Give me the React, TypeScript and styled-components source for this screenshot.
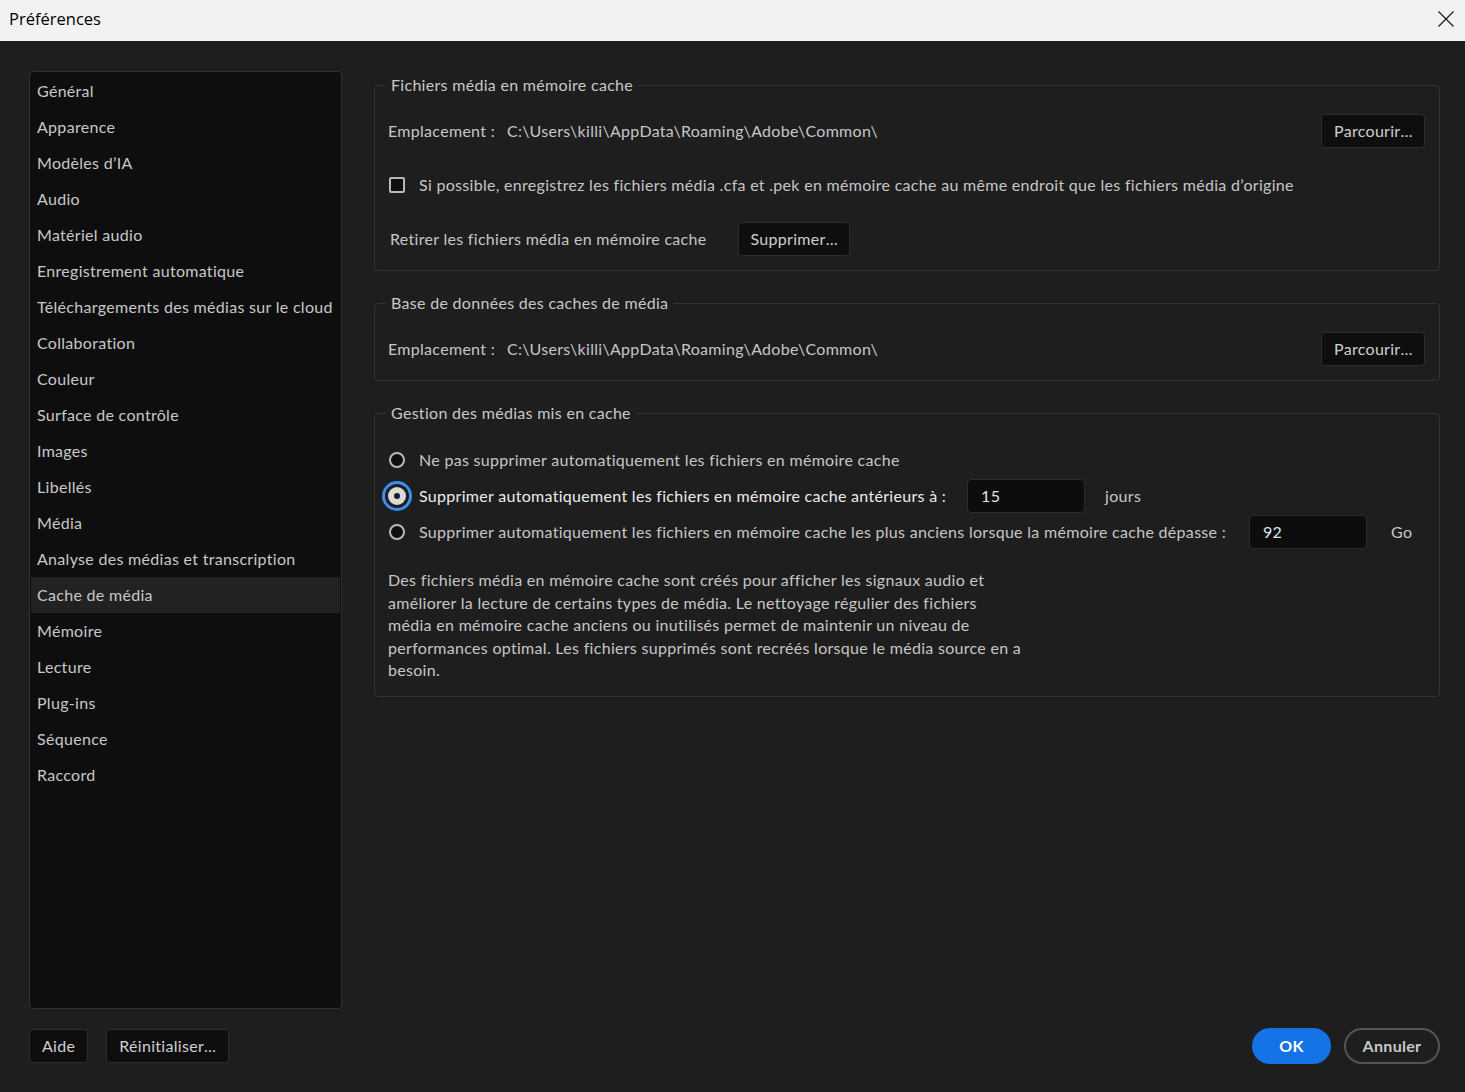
import React from "react";
import styled, { createGlobalStyle, css } from "styled-components";

const Global = createGlobalStyle`
  html, body { margin: 0; padding: 0; background: #1e1e1e; }
  * { box-sizing: border-box; }
`;

const Window = styled.div`
  width: 1465px;
  height: 1092px;
  display: flex;
  flex-direction: column;
  background: #1e1e1e;
  font-family: Lato, "Noto Sans", sans-serif;
  font-size: 16px;
  letter-spacing: 0.3px;
  color: #c6c6c6;
  overflow: hidden;
`;

const TitleBar = styled.div`
  height: 41px;
  flex: 0 0 41px;
  background: #f2f2f2;
  display: flex;
  align-items: center;
  justify-content: space-between;
  padding: 0 9px 4px 9px;
  font-family: "Open Sans", "Noto Sans", sans-serif;
  font-size: 16.5px;
  letter-spacing: 0;
  color: #000;
`;

const CloseButton = styled.button`
  width: 20px;
  height: 20px;
  padding: 0;
  border: 0;
  background: transparent;
  display: flex;
  align-items: center;
  justify-content: center;
`;

const Body = styled.div`
  flex: 1;
  display: flex;
  flex-direction: column;
  padding: 30px 25px 28px 29px;
  min-height: 0;
`;

const Main = styled.div`
  flex: 1;
  display: flex;
  gap: 32px;
  min-height: 0;
`;

const Sidebar = styled.nav`
  width: 313px;
  flex: 0 0 313px;
  background: #0e0e0e;
  border: 1px solid #303030;
  border-radius: 4px;
  padding: 1px;
  display: flex;
  flex-direction: column;
`;

const NavItem = styled.div<{ $active?: boolean }>`
  height: 36px;
  display: flex;
  align-items: center;
  padding-left: 6px;
  padding-bottom: 1px;
  white-space: nowrap;
  color: #c8c8c8;
  background: ${(p) => (p.$active ? "#222222" : "transparent")};
`;

const Content = styled.div`
  flex: 1;
  display: flex;
  flex-direction: column;
  gap: 18px;
`;

const Group = styled.fieldset`
  margin: 0;
  border: 1px solid #333333;
  border-radius: 4px;
  padding: 15px 14px 14px 13px;
  min-width: 0;
  display: flex;
  flex-direction: column;
`;

const Legend = styled.legend`
  margin-left: -2px;
  padding: 0 5px;
  line-height: 28px;
  color: #c8c8c8;
`;

const Rows = styled.div<{ $gap?: number }>`
  display: flex;
  flex-direction: column;
  gap: ${(p) => p.$gap ?? 0}px;
`;

const Row = styled.div<{ $height?: number }>`
  display: flex;
  align-items: center;
  height: ${(p) => p.$height ?? 34}px;
  white-space: nowrap;
`;

const Label = styled.span<{ $gap?: number; $bright?: boolean; $pl?: number }>`
  margin-right: ${(p) => p.$gap ?? 0}px;
  padding-left: ${(p) => p.$pl ?? 0}px;
  padding-bottom: 2px;
  color: ${(p) => (p.$bright ? "#ececec" : "#c6c6c6")};
`;

const Spacer = styled.div`
  flex: 1;
`;

const Button = styled.button`
  font-family: Lato, "Noto Sans", sans-serif;
  font-size: 16px;
  letter-spacing: 0.3px;
  height: 34px;
  padding: 0 12px 2px;
  border-radius: 4px;
  background: #0e0e0e;
  border: 1px solid #2c2c2c;
  color: #cfcfcf;
  display: inline-flex;
  align-items: center;
  justify-content: center;
  white-space: nowrap;
`;

const Ellipsis = styled.span`
  letter-spacing: -0.5px;
`;

const Checkbox = styled.span`
  width: 16px;
  height: 16px;
  border: 2px solid #b8b8b8;
  border-radius: 2px;
  background: #0e0e0e;
  margin-left: 1px;
  margin-right: 14px;
  flex: 0 0 auto;
`;

const RadioWrap = styled.span`
  width: 32px;
  height: 32px;
  margin-left: -7px;
  margin-right: 6px;
  display: flex;
  align-items: center;
  justify-content: center;
  flex: 0 0 auto;
`;

const Radio = styled.span<{ $checked?: boolean }>`
  width: 16px;
  height: 16px;
  border-radius: 50%;
  border: 2px solid #b8b8b8;
  background: #0e0e0e;
  display: flex;
  align-items: center;
  justify-content: center;
  ${(p) =>
    p.$checked &&
    css`
      width: 18px;
      height: 18px;
      border: 0;
      background: #dadada;
      box-shadow: 0 0 0 3px #1e1e1e, 0 0 0 6px #3b8ef0;
      &::after {
        content: "";
        width: 6px;
        height: 6px;
        border-radius: 50%;
        background: #1a1a1a;
      }
    `}
`;

const NumberField = styled.div`
  width: 118px;
  height: 34px;
  border: 1px solid #2c2c2c;
  border-radius: 4px;
  background: #0d0d0d;
  color: #dde6ee;
  display: flex;
  align-items: center;
  padding: 0 0 2px 13px;
  flex: 0 0 auto;
`;

const Paragraph = styled.p`
  margin: 19px 0 0 0;
  line-height: 22.5px;
  color: #c6c6c6;
  max-width: 700px;
`;

const Footer = styled.div`
  display: flex;
  align-items: center;
  margin-top: 19px;
  gap: 18px;
`;

const FooterRight = styled.div`
  margin-left: auto;
  display: flex;
  gap: 13px;
`;

const PillButton = styled.button<{ $primary?: boolean }>`
  font-family: Lato, "Noto Sans", sans-serif;
  font-size: 16px;
  font-weight: 700;
  letter-spacing: 0.3px;
  height: 36px;
  border-radius: 18px;
  padding: 0 0 2px;
  display: inline-flex;
  align-items: center;
  justify-content: center;
  ${(p) =>
    p.$primary
      ? css`
          width: 79px;
          background: #1473e6;
          border: 0;
          color: #ffffff;
        `
      : css`
          width: 96px;
          background: transparent;
          border: 2px solid #555555;
          color: #c8c8c8;
        `}
`;

const navItems = [
  "Général",
  "Apparence",
  "Modèles d’IA",
  "Audio",
  "Matériel audio",
  "Enregistrement automatique",
  "Téléchargements des médias sur le cloud",
  "Collaboration",
  "Couleur",
  "Surface de contrôle",
  "Images",
  "Libellés",
  "Média",
  "Analyse des médias et transcription",
  "Cache de média",
  "Mémoire",
  "Lecture",
  "Plug-ins",
  "Séquence",
  "Raccord",
];

const PATH = "C:\\Users\\killi\\AppData\\Roaming\\Adobe\\Common\\";

export default function App() {
  return (
    <>
      <Global />
      <Window>
        <TitleBar>
          <span>Préférences</span>
          <CloseButton aria-label="Fermer">
            <svg width="16" height="16" viewBox="0 0 16 16">
              <path d="M0.5 0.5 L15.5 15.5 M15.5 0.5 L0.5 15.5" stroke="#1a1a1a" strokeWidth="1.2" fill="none" />
            </svg>
          </CloseButton>
        </TitleBar>
        <Body>
          <Main>
            <Sidebar>
              {navItems.map((n) => (
                <NavItem key={n} $active={n === "Cache de média"}>
                  {n}
                </NavItem>
              ))}
            </Sidebar>
            <Content>
              <Group>
                <Legend>Fichiers média en mémoire cache</Legend>
                <Rows $gap={20}>
                  <Row>
                    <Label $gap={12}>Emplacement :</Label>
                    <Label>{PATH}</Label>
                    <Spacer />
                    <Button>
                      Parcourir<Ellipsis>…</Ellipsis>
                    </Button>
                  </Row>
                  <Row>
                    <Checkbox />
                    <Label>
                      Si possible, enregistrez les fichiers média .cfa et .pek en mémoire cache au même endroit que les
                      fichiers média d’origine
                    </Label>
                  </Row>
                  <Row>
                    <Label $pl={2} $gap={31}>
                      Retirer les fichiers média en mémoire cache
                    </Label>
                    <Button>
                      Supprimer<Ellipsis>…</Ellipsis>
                    </Button>
                  </Row>
                </Rows>
              </Group>
              <Group>
                <Legend>Base de données des caches de média</Legend>
                <Rows>
                  <Row>
                    <Label $gap={12}>Emplacement :</Label>
                    <Label>{PATH}</Label>
                    <Spacer />
                    <Button>
                      Parcourir<Ellipsis>…</Ellipsis>
                    </Button>
                  </Row>
                </Rows>
              </Group>
              <Group>
                <Legend>Gestion des médias mis en cache</Legend>
                <Rows>
                  <Row $height={36}>
                    <RadioWrap>
                      <Radio />
                    </RadioWrap>
                    <Label>Ne pas supprimer automatiquement les fichiers en mémoire cache</Label>
                  </Row>
                  <Row $height={36}>
                    <RadioWrap>
                      <Radio $checked />
                    </RadioWrap>
                    <Label $bright $gap={21}>
                      Supprimer automatiquement les fichiers en mémoire cache antérieurs à :
                    </Label>
                    <NumberField>15</NumberField>
                    <Label $pl={20}>jours</Label>
                  </Row>
                  <Row $height={36}>
                    <RadioWrap>
                      <Radio />
                    </RadioWrap>
                    <Label $gap={23}>
                      Supprimer automatiquement les fichiers en mémoire cache les plus anciens lorsque la mémoire cache
                      dépasse :
                    </Label>
                    <NumberField>92</NumberField>
                    <Label $pl={24}>Go</Label>
                  </Row>
                </Rows>
                <Paragraph>
                  Des fichiers média en mémoire cache sont créés pour afficher les signaux audio et
                  <br />
                  améliorer la lecture de certains types de média. Le nettoyage régulier des fichiers
                  <br />
                  média en mémoire cache anciens ou inutilisés permet de maintenir un niveau de
                  <br />
                  performances optimal. Les fichiers supprimés sont recréés lorsque le média source en a
                  <br />
                  besoin.
                </Paragraph>
              </Group>
            </Content>
          </Main>
          <Footer>
            <Button>Aide</Button>
            <Button>
              Réinitialiser<Ellipsis>…</Ellipsis>
            </Button>
            <FooterRight>
              <PillButton $primary>OK</PillButton>
              <PillButton>Annuler</PillButton>
            </FooterRight>
          </Footer>
        </Body>
      </Window>
    </>
  );
}
